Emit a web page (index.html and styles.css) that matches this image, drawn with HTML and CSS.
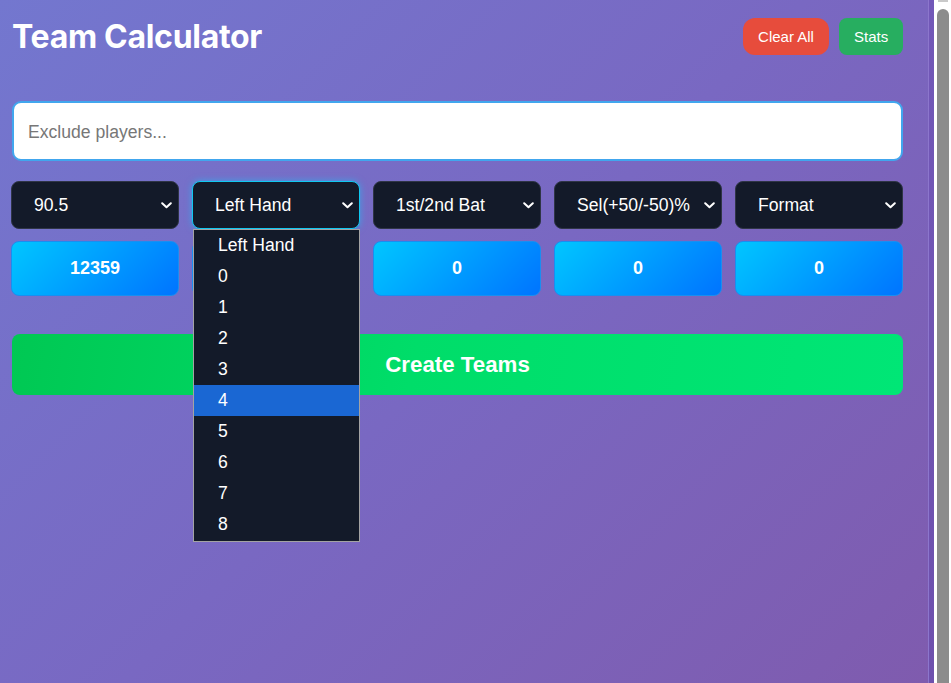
FILE: index.html
```html
<!DOCTYPE html>
<html lang="en">
<head>
<meta charset="utf-8">
<title>Team Calculator</title>
<link rel="stylesheet" href="styles.css">
</head>
<body>
<div class="screen">
  <main class="app">
    <header class="topbar">
      <h1 class="title">Team Calculator</h1>
      <div class="actions">
        <button class="btn btn-clear">Clear All</button>
        <button class="btn btn-stats">Stats</button>
      </div>
    </header>

    <input class="exclude" type="text" placeholder="Exclude players...">

    <div class="controls">
      <div class="select"><span>90.5</span><svg class="chev" width="11" height="7" viewBox="0 0 11 7"><path d="M1.2 1.2 L5.5 5.3 L9.8 1.2" fill="none" stroke="#fff" stroke-width="2" stroke-linecap="round" stroke-linejoin="round"/></svg></div>
      <div class="select-wrap">
        <div class="select is-open"><span>Left Hand</span><svg class="chev" width="11" height="7" viewBox="0 0 11 7"><path d="M1.2 1.2 L5.5 5.3 L9.8 1.2" fill="none" stroke="#fff" stroke-width="2" stroke-linecap="round" stroke-linejoin="round"/></svg></div>
        <ul class="menu">
          <li>Left Hand</li>
          <li>0</li>
          <li>1</li>
          <li>2</li>
          <li>3</li>
          <li class="active">4</li>
          <li>5</li>
          <li>6</li>
          <li>7</li>
          <li>8</li>
        </ul>
      </div>
      <div class="select"><span>1st/2nd Bat</span><svg class="chev" width="11" height="7" viewBox="0 0 11 7"><path d="M1.2 1.2 L5.5 5.3 L9.8 1.2" fill="none" stroke="#fff" stroke-width="2" stroke-linecap="round" stroke-linejoin="round"/></svg></div>
      <div class="select"><span>Sel(+50/-50)%</span><svg class="chev" width="11" height="7" viewBox="0 0 11 7"><path d="M1.2 1.2 L5.5 5.3 L9.8 1.2" fill="none" stroke="#fff" stroke-width="2" stroke-linecap="round" stroke-linejoin="round"/></svg></div>
      <div class="select"><span>Format</span><svg class="chev" width="11" height="7" viewBox="0 0 11 7"><path d="M1.2 1.2 L5.5 5.3 L9.8 1.2" fill="none" stroke="#fff" stroke-width="2" stroke-linecap="round" stroke-linejoin="round"/></svg></div>

      <div class="value">12359</div>
      <div class="value">0</div>
      <div class="value">0</div>
      <div class="value">0</div>
      <div class="value">0</div>
    </div>

    <button class="create">Create Teams</button>
  </main>
  <div class="edge"></div>
  <div class="scrollbar">
    <div class="arrow"></div>
    <div class="thumb"></div>
  </div>
</div>
</body>
</html>
```

FILE: styles.css
```css
* {
  box-sizing: border-box;
}

html,
body {
  margin: 0;
  padding: 0;
  height: 100%;
  overflow: hidden;
}

body {
  font-family: "Liberation Sans", Arial, sans-serif;
  color: #fff;
}

.screen {
  display: flex;
  height: 683px;
  width: 951px;
}

.app {
  width: 929px;
  flex: 0 0 929px;
  height: 100%;
  padding: 18px 25px 0 11px;
  background: linear-gradient(135deg, #7377cf 0%, #7968c2 50%, #7f5bae 100%);
  border-right: 1px solid #8c76cc;
}

.edge {
  flex: 0 0 5px;
  background: linear-gradient(180deg, #7258b8 0%, #6e50ad 100%);
}

.scrollbar {
  flex: 0 0 17px;
  background: #ffffff;
  display: flex;
  flex-direction: column;
  padding-left: 3px;
  padding-right: 2px;
}

.scrollbar .arrow {
  height: 2px;
  margin: 0 1px 7px 1px;
  background: #c9c9c9;
}

.scrollbar .thumb {
  flex: 1;
  background: #8c8c8c;
  border-radius: 6px 6px 0 0;
}

/* header */
.topbar {
  display: flex;
  align-items: center;
  justify-content: space-between;
  height: 37px;
  margin-bottom: 46px;
  padding-left: 1px;
}

.title {
  margin: 0;
  font-family: Inter, "Liberation Sans", sans-serif;
  font-weight: 700;
  font-size: 32px;
  line-height: 37px;
  letter-spacing: -0.3px;
  color: #ffffff;
}

.actions {
  display: flex;
  gap: 10px;
}

.btn {
  height: 37px;
  padding: 0 15px;
  border: none;
  color: #fff;
  font-family: "Liberation Sans", Arial, sans-serif;
  font-size: 15px;
}

.btn-clear {
  width: 86px;
  background: #e74c3c;
  border-radius: 12px;
}

.btn-stats {
  width: 64px;
  background: #27ae60;
  border-radius: 8px;
}

/* exclude input */
.exclude {
  display: block;
  width: calc(100% - 1px);
  height: 60px;
  margin: 0 0 20px 1px;
  padding: 2px 14px 0 14px;
  border: 2px solid #41a6ee;
  border-radius: 9px;
  background: #ffffff;
  font-family: "Liberation Sans", Arial, sans-serif;
  font-size: 17.6px;
  color: #222;
  outline: none;
}

.exclude::placeholder {
  color: #777777;
}

/* controls grid */
.controls {
  display: grid;
  grid-template-columns: repeat(5, 1fr);
  grid-template-rows: 48px 55px;
  gap: 12px 13px;
}

.select-wrap {
  position: relative;
}

.select {
  height: 48px;
  display: flex;
  align-items: center;
  justify-content: space-between;
  padding: 1px 6px 0 22px;
  background: #131a29;
  border: 1px solid #2f3546;
  border-radius: 8px;
  font-size: 17.6px;
  color: #fff;
  white-space: nowrap;
}

.select.is-open {
  border-color: #10c8f0;
  box-shadow: 0 0 7px rgba(20, 200, 255, 0.55);
}

.chev {
  flex: 0 0 auto;
  display: block;
}

.menu {
  position: absolute;
  top: 48px;
  left: 1px;
  width: 167px;
  margin: 0;
  padding: 0 0 1px 0;
  list-style: none;
  background: #131a29;
  border: 1px solid #a3a3a3;
  z-index: 5;
}

.menu li {
  height: 31px;
  line-height: 31px;
  padding-left: 24px;
  font-size: 17.6px;
  color: #fff;
}

.menu li.active {
  background: #1a67d3;
}

.value {
  display: flex;
  align-items: center;
  justify-content: center;
  background: linear-gradient(135deg, #00c6ff 0%, #0074ff 100%);
  border: 1px solid #1a8ef0;
  border-radius: 8px;
  font-weight: 700;
  font-size: 18px;
  color: #fff;
}

/* create button */
.create {
  display: block;
  width: calc(100% - 1px);
  height: 61px;
  margin: 38px 0 0 1px;
  border: none;
  border-radius: 8px;
  background: linear-gradient(100deg, #00c853 0%, #00dd69 45%, #00e676 100%);
  font-family: "Liberation Sans", Arial, sans-serif;
  font-weight: 700;
  font-size: 22.3px;
  color: #fff;
}
```
